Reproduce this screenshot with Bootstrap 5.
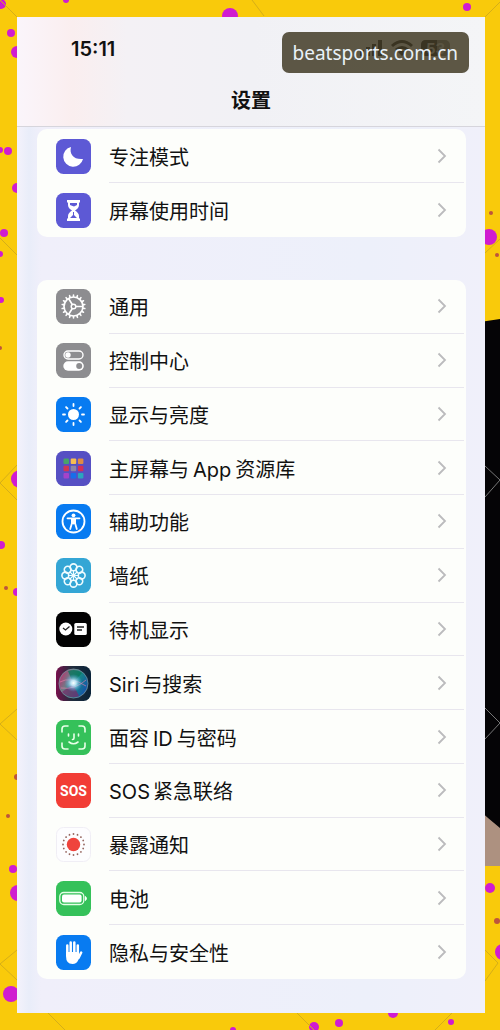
<!DOCTYPE html>
<html lang="zh-CN">
<head>
<meta charset="utf-8">
<meta name="viewport" content="width=device-width, initial-scale=1">
<title>设置</title>
<link rel="stylesheet" href="https://cdn.jsdelivr.net/npm/bootstrap@5.3.0/dist/css/bootstrap.min.css">
<script src="https://cdn.jsdelivr.net/npm/bootstrap@5.3.0/dist/js/bootstrap.bundle.min.js"></script>
<style>
body{background:#f9ca0b;color:#111;font-family:Inter,"Noto Sans CJK SC",sans-serif}
.page-frame{padding:17px 15px 17px 17px}
.backdrop{z-index:-1}
.screen{background:linear-gradient(90deg,#f4f2fb,#e9edf9 12px,#f0effa 24px,#edf0fa 75%,#f0f0fa)}
.top-area{height:110px;background:linear-gradient(90deg,#faf5fb,#faeeef 55px,#f4f1f5 110px,#f1f1f5 50%,#f4f5f7);border-bottom:1px solid #d6d5dc}
.status{height:64px;padding:0 26px 0 54px}
.clock{font-size:20px;font-weight:600;line-height:24px}
.title{font-size:20px;font-weight:700;line-height:40px}
.settings{padding:2px 19px 34px 20px;gap:43px}
.group{border-radius:10px;background:#fdfefb}
.group-rest{flex:1 1 auto}
.setting{flex:1 0 54px;padding:0 19px;gap:18px;color:#111;font-size:20px;line-height:30px;text-decoration:none}
.group-rest .setting{flex-basis:53px}
.setting-body{border-bottom:1px solid #e8e6ee;margin-right:-17px;padding-right:17px}
.setting:last-child .setting-body{border-color:transparent}
.label-text{padding-top:4px}
.latin-start{margin-right:3px}
.latin-mid{margin:0 4px}
.tile{width:35px;height:35px;flex:none}
.chev{width:10px;height:16px;flex:none}
.site-tag{top:32px;right:31px;padding:0 11px;height:41px;border-radius:7px;background:rgba(67,60,40,.86);color:#e9f1f8;font:19px/43px "Noto Sans",sans-serif}
</style>
</head>
<body>
<div class="page-frame position-relative min-vh-100 d-flex">
<svg class="backdrop position-absolute top-0 start-0 w-100 h-100" viewBox="0 0 500 1030" preserveAspectRatio="none" aria-hidden="true">
<path d="M480 322L500 319V840H480z" fill="#050406"/>
<path d="M480 811Q489 819 500 828V866H480z" fill="#ad9180"/>
<g fill="#d01cd0"><circle cx="1" cy="4" r="5"/><circle cx="66" cy="0" r="3"/><circle cx="230" cy="16" r="8"/><circle cx="467" cy="7" r="4"/><circle cx="11" cy="33" r="4"/><circle cx="17" cy="52" r="6"/><circle cx="0" cy="150" r="3"/><circle cx="8" cy="151" r="4"/><circle cx="17" cy="188" r="5"/><circle cx="4" cy="233" r="4"/><circle cx="0" cy="254" r="3"/><circle cx="1" cy="300" r="3"/><circle cx="20" cy="479" r="9"/><circle cx="1" cy="545" r="4"/><circle cx="17" cy="592" r="4"/><circle cx="13" cy="869" r="4"/><circle cx="18" cy="893" r="8"/><circle cx="11" cy="994" r="8"/><circle cx="489" cy="237" r="8"/><circle cx="490" cy="888" r="5"/><circle cx="503" cy="952" r="8"/><circle cx="314" cy="1027" r="5"/><circle cx="339" cy="1023" r="4"/><circle cx="393" cy="1013" r="5"/><circle cx="451" cy="1022" r="3"/><circle cx="233" cy="1030" r="3"/></g>
<g fill="#bd543c"><circle cx="491" cy="213" r="2"/><circle cx="497" cy="255" r="2"/><circle cx="0" cy="348" r="2"/><circle cx="6" cy="588" r="2"/><circle cx="17" cy="777" r="3"/><circle cx="8" cy="816" r="2"/><circle cx="497" cy="921" r="3"/></g>
<g fill="none" stroke="#d5ae19"><path d="M0 238L17 255M17 465L0 483L17 500M17 709L0 724L17 740M17 950L0 964L17 980M0 0L17 17M252 0L264 16M485 17L500 2M485 253L500 239M485 950L498 963L485 981M297 1013L314 1030M435 1030L452 1013M48 1013L65 1030"/><path d="M485 466L500 480L485 497M485 708L500 723L485 739" stroke="#777"/></g>
</svg>
<div class="screen flex-fill d-flex flex-column">
<header class="top-area">
<div class="status d-flex justify-content-between align-items-center">
<span class="clock">15:11</span>
<svg width="100" height="20" viewBox="0 0 100 20" aria-hidden="true"><path d="M1 11h4v6H1zM7 8h4v9H7zM13 5h4v12h-4zM19 1h4v16h-4z"/><path d="M33 7Q43-2 53 7M37 11Q43 6 49 11" fill="none" stroke="#000" stroke-width="3"/><path d="M39 13Q43 10 47 13L43 17z"/><rect x="62" y="1" width="29" height="16" rx="5" fill="#777"/><path d="M67 1h11v16H67q-5 0-5-5V6q0-5 5-5z"/><text x="67" y="15" font-size="15" font-weight="700" fill="#ddd">53</text></svg>
</div>
<h1 class="title text-center m-0">设置</h1>
</header>
<main class="settings flex-fill d-flex flex-column">
<nav class="group d-flex flex-column" id="focusGroup" aria-label="专注"></nav>
<nav class="group group-rest d-flex flex-column" id="generalGroup" aria-label="通用"></nav>
</main>
</div>
<div class="site-tag position-absolute">beatsports.com.cn</div>
</div>
<script>
const rays=(n,a,b,w,c)=>Array.from({length:n},(_,i)=>`<path d="M17.5 ${a}V${b}" stroke="${c}" stroke-width="${w}" stroke-linecap="round" transform="rotate(${i*360/n} 17.5 17.5)"/>`).join('');
const art={
moon:['#5d59d5','<path d="M15 8C13 15 18 21 27 20A10 10 0 1 1 15 8z" fill="#fff"/>'],
hourglass:['#5d59d5','<path d="M11 7h13v2.500H11zM11 25.500h13V28H11z" fill="#fff"/><path d="M12 9v3q0 3 4 5.500Q12 20 12 23v3h11v-3q0-3-4-5.500Q23 15 23 12V9z" fill="#fff"/><path d="M14 10h7v2l-3 1.500L14 12zM17 19h1v3l3 3h-7l3-3z" fill="#5d59d5"/>'],
gear:['#8d8d90',rays(18,6,7.5,1.6,'#fff')+'<circle cx="17.500" cy="17.500" r="9.500" fill="none" stroke="#fff" stroke-width="1.700"/><circle cx="17.500" cy="17.500" r="2.300" fill="none" stroke="#fff" stroke-width="1.400"/><path d="M20 17.500h7M16.300 15.500L12.500 9.500M16.300 19.500L12.500 25.500" stroke="#fff" stroke-width="1.600"/>'],
control:['#8d8d90','<rect x="8" y="8" width="19" height="8" rx="4" fill="none" stroke="#fff" stroke-width="1.400"/><circle cx="12" cy="12" r="2.700" fill="#fff"/><rect x="7.300" y="18.300" width="20.500" height="9.400" rx="4.700" fill="#fff"/><circle cx="23.200" cy="23" r="3" fill="#8d8d90"/>'],
sun:['#087bf1','<circle cx="17.500" cy="17.500" r="5.500" fill="#fff"/>'+rays(8,7,9,1.8,'#fff')],
apps:['#5650c3',['#47a36a','#f6bd51','#e08b43','#cf3657','#8c86a7','#d32f58','#a443c9','#176eea','#2ba6bd'].map((c,i)=>`<rect x="${7.5+(i%3)*7.2}" y="${7.5+Math.floor(i/3)*7.2}" width="5.500" height="5.500" rx="1" fill="${c}"/>`).join('')],
access:['#087bf1','<circle cx="17.500" cy="17.500" r="11" fill="none" stroke="#fff" stroke-width="1.800"/><circle cx="17.500" cy="11.300" r="1.900" fill="#fff"/><path d="M11.500 14.300h12M16 19l-1.800 6M19 19l1.800 6" fill="none" stroke="#fff" stroke-width="1.800" stroke-linecap="round"/><path d="M15 14h5v5.500l-2.500 1-2.500-1z" fill="#fff"/>'],
flower:['#34a6d5',Array.from({length:8},(_,i)=>`<circle cx="17.500" cy="9.300" r="3.400" fill="none" stroke="#effcff" stroke-width="1.600" transform="rotate(${i*45} 17.500 17.500)"/>`).join('')+rays(8,12.5,15.5,1.2,'#effcff')+'<circle cx="17.500" cy="17.500" r="2" fill="#effcff"/>'],
standby:['#020202','<circle cx="9.800" cy="17" r="6.500" fill="#fff"/><path d="M7 16l2.500 2 4-3.500" fill="none" stroke="#222" stroke-width="1.300"/><rect x="18.300" y="11" width="12.500" height="12" rx="1.600" fill="#fff"/><path d="M21 15h7M21 18h5" stroke="#222" stroke-width="1.300"/>'],
siri:['url(#siriBase)','<defs><linearGradient id="siriBase"><stop stop-color="#77114c"/><stop offset=".45" stop-color="#202d3d"/><stop offset="1" stop-color="#092338"/></linearGradient><linearGradient id="siriOrb" x2="1" y2=".5"><stop stop-color="#d21a67"/><stop offset=".4" stop-color="#737985"/><stop offset=".65" stop-color="#168b82"/><stop offset="1" stop-color="#1559a6"/></linearGradient><radialGradient id="siriLight"><stop stop-color="#fff"/><stop offset=".3" stop-color="#c8edff" stop-opacity=".9"/><stop offset="1" stop-color="#499ee5" stop-opacity="0"/></radialGradient></defs><circle cx="17.500" cy="17.500" r="14.500" fill="url(#siriOrb)" stroke="#73939f" stroke-width=".8"/><path d="M17 17L12 5Q20 2 26 7z" fill="#0a755d" opacity=".8"/><path d="M17 18L6 26Q14 34 23 30z" fill="#7d2668" opacity=".7"/><path d="M4 16Q14 10 30 20M5 22Q19 24 30 14" fill="none" stroke="#ed80ac" opacity=".6"/><circle cx="17.500" cy="17" r="9" fill="url(#siriLight)"/>'],
face:['#35c15a','<g fill="none" stroke="#e9ffe9" stroke-width="1.600" stroke-linecap="round"><path d="M6 12V9q0-3 3-3h3M23 6h3q3 0 3 3v3M29 23v3q0 3-3 3h-3M12 29H9q-3 0-3-3v-3M12.500 14v2M22.500 14v2M18 14v4q0 1.500-1.500 1.500M13 22q4.500 3.500 9 0"/></g>'],
sos:['#f23d35','<text x="17.500" y="23" text-anchor="middle" font-family="Roboto,sans-serif" font-size="14" font-weight="700" fill="#fff">SOS</text>'],
exposure:['#fdfdff','<rect x=".5" y=".5" width="34" height="34" rx="7" fill="none" stroke="#f0eef5"/><circle cx="17.500" cy="17.500" r="6.700" fill="#ef443d"/>'+Array.from({length:16},(_,i)=>`<circle cx="17.500" cy="7" r=".9" fill="#96665f" transform="rotate(${i*22.5} 17.500 17.500)"/>`).join('')],
battery:['#35c15a','<rect x="3.800" y="11.500" width="24" height="12" rx="4" fill="none" stroke="#e6ffe8" stroke-width="1.300"/><rect x="6" y="13.500" width="19.600" height="8" rx="2" fill="#fff"/><path d="M29.500 15.500q2 2 0 4z" fill="#fff" stroke="#fff"/>'],
hand:['#087bf1','<g fill="none" stroke="#fff" stroke-width="2.500" stroke-linecap="round"><path d="M11.300 18V10.500M14.700 18V7.500M18.300 18V7.500M21.800 19V10.500M22.500 23l2.700-5.500"/></g><path d="M10 17h13v3l1.500-.5-2.200 5.500q-1.600 4-5.800 4-6.500 0-6.500-8z" fill="#fff"/>']
};
const mixLabel=label=>label.replace(/[A-Za-z]+/g,(word,at)=>`<span class="${at?'latin-mid':'latin-start'}">${word}</span>`);
const row=([key,label])=>`<a href="#${key}" id="${key}" class="setting d-flex align-items-stretch"><svg class="tile align-self-center" viewBox="0 0 35 35" aria-hidden="true"><rect width="35" height="35" rx="7.500" fill="${art[key][0]}"/>${art[key][1]}</svg><span class="setting-body flex-fill d-flex align-items-center justify-content-between"><span class="label-text">${mixLabel(label)}</span><svg class="chev" viewBox="0 0 10 16" aria-hidden="true"><path d="M1.500 1.500L8 8l-6.500 6.500" fill="none" stroke="#bbbbbd" stroke-width="1.800"/></svg></span></a>`;
focusGroup.innerHTML=[['moon','专注模式'],['hourglass','屏幕使用时间']].map(row).join('');
generalGroup.innerHTML=[['gear','通用'],['control','控制中心'],['sun','显示与亮度'],['apps','主屏幕与App资源库'],['access','辅助功能'],['flower','墙纸'],['standby','待机显示'],['siri','Siri与搜索'],['face','面容ID与密码'],['sos','SOS紧急联络'],['exposure','暴露通知'],['battery','电池'],['hand','隐私与安全性']].map(row).join('');
</script>
</body>
</html>
